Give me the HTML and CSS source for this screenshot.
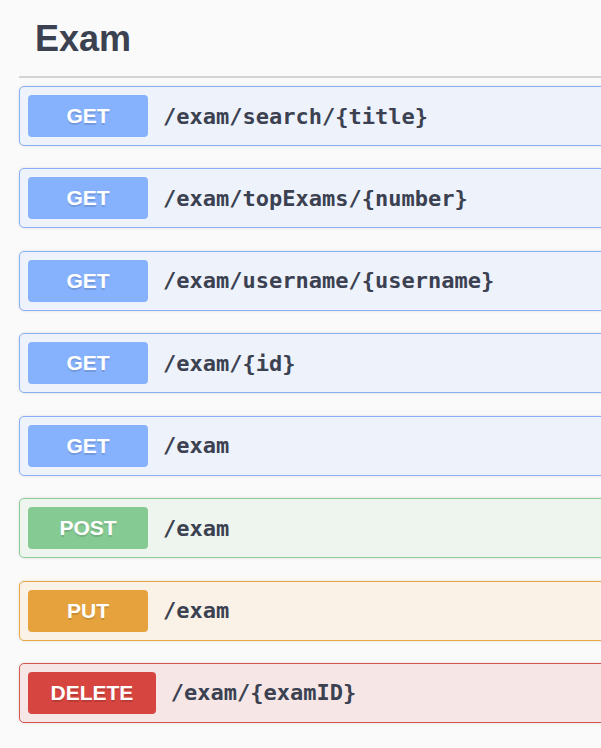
FILE: index.html
```html
<!DOCTYPE html>
<html>
<head>
<meta charset="utf-8">
<link rel="stylesheet" href="styles.css">
</head>
<body>
<div class="viewport">
<div class="tag-section">
  <h4 class="tag-title"><span>Exam</span></h4>
  <div class="ops">
    <div class="op op-get"><span class="method">GET</span><span class="path">/exam/search/{title}</span></div>
    <div class="op op-get"><span class="method">GET</span><span class="path">/exam/topExams/{number}</span></div>
    <div class="op op-get"><span class="method">GET</span><span class="path">/exam/username/{username}</span></div>
    <div class="op op-get"><span class="method">GET</span><span class="path">/exam/{id}</span></div>
    <div class="op op-get"><span class="method">GET</span><span class="path">/exam</span></div>
    <div class="op op-post"><span class="method">POST</span><span class="path">/exam</span></div>
    <div class="op op-put"><span class="method">PUT</span><span class="path">/exam</span></div>
    <div class="op op-delete"><span class="method">DELETE</span><span class="path">/exam/{examID}</span></div>
  </div>
</div>
</div>
</body>
</html>
```
FILE: styles.css
```css
html, body {
  margin: 0;
  padding: 0;
  background: #fafafa;
  overflow: hidden;
}
.viewport {
  width: 100%;
  overflow: hidden;
}
.tag-section {
  padding-left: 19px;
  margin-right: -40px;
}
.tag-title {
  margin: 0;
  padding: 19px 0 17px 16px;
  font-family: "Liberation Sans", Arial, sans-serif;
  font-weight: 700;
  font-size: 36px;
  line-height: 40px;
  color: #3b4151;
  border-bottom: 2px solid #d3d3d4;
}
.ops {
  margin-top: 8px;
  padding-bottom: 26px;
  display: flex;
  flex-direction: column;
  gap: 22.43px;
}
.op {
  box-sizing: border-box;
  height: 60px;
  display: flex;
  align-items: center;
  padding: 0 8px;
  border: 1px solid;
  border-radius: 5px;
  box-shadow: 0 0 3px rgba(0, 0, 0, .12);
}
.method {
  box-sizing: border-box;
  min-width: 120px;
  height: 42px;
  padding: 0 22.5px;
  border-radius: 4px;
  display: flex;
  align-items: center;
  justify-content: center;
  font-family: "Liberation Sans", Arial, sans-serif;
  font-weight: 700;
  font-size: 21px;
  color: #fff;
  text-shadow: 0 1.5px 0 rgba(0, 0, 0, .12);
}
.path {
  padding-left: 15px;
  font-family: "DejaVu Sans Mono", "Liberation Mono", monospace;
  font-weight: 700;
  font-size: 22px;
  color: #3b4151;
  white-space: nowrap;
}
.op-get { background: #edf2fb; border-color: #89aff5; }
.op-get .method { background: #85b1fd; }
.op-post { background: #eef5ef; border-color: #90cc99; }
.op-post .method { background: #86ca93; }
.op-put { background: #faf2e7; border-color: #eaa640; }
.op-put .method { background: #e5a23d; }
.op-delete { background: #f6e7e6; border-color: #d9534f; }
.op-delete .method { background: #d6453f; }
```
